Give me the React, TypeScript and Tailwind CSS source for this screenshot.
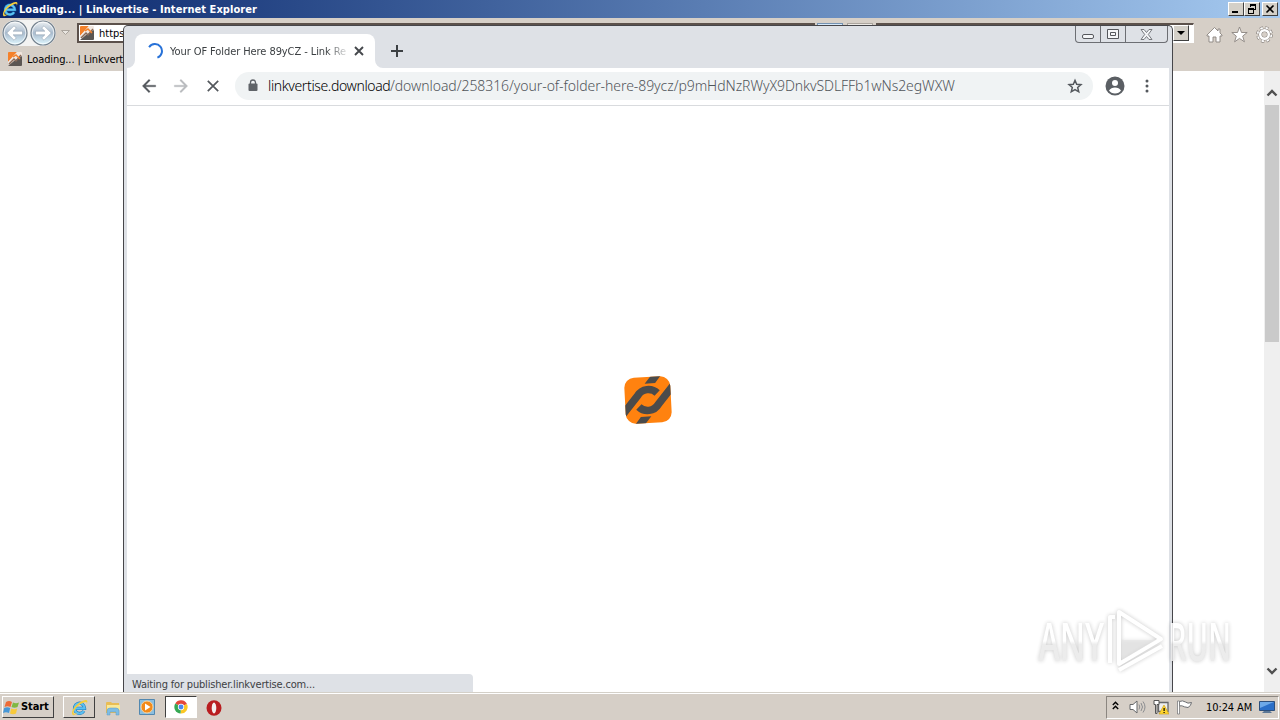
import { ReactNode } from "react";

const ARROW = "M20 11H7.83l5.59-5.59L12 4l-8 8 8 8 1.41-1.41L7.83 13H20z";

function IeLogo({ className }: { className: string }) {
  return (
    <svg viewBox="0 0 16 16" className={className}>
      <path d="M3.500 8.800h9.300a4.800 4.800 0 1 0-.7 2.500" fill="none" stroke="#1c76b8" strokeWidth="3" />
      <path d="M3.500 8.800h9.300a4.800 4.800 0 1 0-.7 2.500" fill="none" stroke="#5cc1f2" strokeWidth="2" />
      <path d="M1.300 14.700C-.9 11.500 6.500 2 13.500 1c2.200-.2 2.400 1.600 1.200 3.700.2-1.900-.5-2.300-2-1.700C7.500 4.600 1.500 10.800 2.500 13.300c.5 1 2.400.4 3.600-.3-2 1.900-4 2.900-4.800 1.700z" fill="#f4ce3c" />
    </svg>
  );
}

function LinkIcon() {
  return (
    <svg viewBox="0 0 14 14" className="w-3.5 h-3.5 shrink-0">
      <path d="M0 1q0-1 1-1h8L0 10z" fill="#f5812a" />
      <path d="M9 0h4q1 0 1 1v5L4 11l-4 1v-2z" fill="#f2e7df" />
      <path d="M0 14l6-5 8-5v9q0 1-1 1z" fill="#5b5653" />
      <path d="M1 12l5-5 2 2 5-6" fill="none" stroke="#8a6a58" strokeWidth="1.500" />
      <path d="M5 5l3-2 4 4" fill="none" stroke="#f5812a" strokeWidth="1.500" />
    </svg>
  );
}

function RoundArrow({ flip }: { flip?: boolean }) {
  return (
    <svg viewBox="0 0 26 26" className={flip ? "w-[26px] h-[26px] -scale-x-100" : "w-[26px] h-[26px]"}>
      <defs>
        <linearGradient id="orb" x1="0" y1="0" x2="0" y2="1">
          <stop offset="0" stopColor="#eef1f3" />
          <stop offset=".5" stopColor="#a9bbce" />
          <stop offset="1" stopColor="#e0f8ff" />
        </linearGradient>
      </defs>
      <circle cx="13" cy="13" r="12" fill="url(#orb)" stroke="#74818d" strokeWidth="1.200" />
      <circle cx="13" cy="13" r="10.800" fill="none" stroke="#fff" strokeOpacity=".7" />
      <path d="M4.800 13l7.200-7.200 2.300 2.300-3.200 3.100H20.500v3.600h-9.400l3.200 3.100-2.300 2.300z" fill="#fff" stroke="#8898a8" strokeWidth=".5" />
    </svg>
  );
}

function ClassicButton({ children }: { children: ReactNode }) {
  return (
    <div className="w-4 h-3.5 bg-[#d4d0c8] border border-t-white border-l-white border-b-[#404040] border-r-[#404040] flex items-center justify-center">
      {children}
    </div>
  );
}

function IeWindow() {
  return (
    <div className="h-[692px] flex flex-col">
      {/* Title bar */}
      <div className="h-[18px] shrink-0 flex items-center justify-between pl-0.5 pr-0.5 bg-linear-to-r from-[#0a246a] to-[#a6caf0]">
        <div className="flex items-center gap-px">
          <IeLogo className="w-4 h-4" />
          <span className="pt-px text-[11px] leading-[16px] font-bold text-white whitespace-nowrap tracking-[0.065px]">Loading... | Linkvertise - Internet Explorer</span>
        </div>
        <div className="flex items-center">
          <ClassicButton>
            <svg viewBox="0 0 12 10" className="w-3 h-2.5"><path d="M2 7h6v2H2z" /></svg>
          </ClassicButton>
          <ClassicButton>
            <svg viewBox="0 0 12 10" className="w-3 h-2.5" shapeRendering="crispEdges">
              <path d="M4 0h6v6H8V5h1V2H5v1H4zM2 4h6v6H2zM3 6v3h4V6z" fillRule="evenodd" />
            </svg>
          </ClassicButton>
          <span className="w-0.5" />
          <ClassicButton>
            <svg viewBox="0 0 12 10" className="w-3 h-2.5"><path d="M2.500 1.500l7 7m0-7l-7 7" stroke="#000" strokeWidth="1.600" /></svg>
          </ClassicButton>
        </div>
      </div>

      {/* Address row */}
      <div className="h-[30px] shrink-0 flex items-center bg-[#d6cfc7] pl-[2px] pr-[7px]">
        <div className="flex items-center gap-[2px] rounded-full bg-[#f3f3f2]">
          <RoundArrow />
          <RoundArrow flip />
        </div>
        <svg viewBox="0 0 9 6" className="w-[9px] h-1.5 ml-[5px]"><path d="M.5.500h8l-4 4z" fill="#e9e6e1" stroke="#aaa49d" /></svg>
        <div className="w-[738px] h-5 ml-[7px] bg-white border-2 border-[#5c514b] flex items-center pl-px gap-[5px] text-[11px] text-black">
          <LinkIcon />
          <span className="pt-0.5">https:</span>
        </div>
        <div className="h-5 w-[26px] ml-[2px] bg-[#d5e8fa] border border-[#7492b2]" />
        <div className="h-5 w-[26px] ml-[4px] bg-[#ece9e5] border border-[#aaa49d]" />
        <div className="w-[318px] h-5 ml-[3px] bg-white border-t-2 border-l-2 border-[#5c514b] border-b border-r border-b-white border-r-white flex justify-end pr-[4px]">
          <div className="w-4 h-4 bg-[#d4d0c8] border border-t-white border-l-white border-b-[#404040] border-r-[#404040] flex items-center justify-center">
            <svg viewBox="0 0 8 4" className="w-2 h-1"><path d="M0 0h8L4 4z" /></svg>
          </div>
        </div>
        <div className="flex-1 flex items-center justify-end gap-[8px] pt-[3px]">
          <svg viewBox="0 0 17 17" className="w-[17px] h-[17px]">
            <path d="M8.500 1.500L12 5V3h2v4l2 2v1h-2v6h-4v-5H7v5H3v-6H1V9z" fill="#fff" stroke="#8b8580" strokeWidth=".9" />
          </svg>
          <svg viewBox="0 0 17 17" className="w-[17px] h-[17px]">
            <path d="M8.500 1l2 5.500h5.700l-4.500 3.600 1.700 5.700-4.900-3.400-4.900 3.400 1.700-5.700L.8 6.500h5.700z" fill="#fff" stroke="#8b8580" strokeWidth=".9" />
          </svg>
          <svg viewBox="0 0 17 17" className="w-[17px] h-[17px]">
            <circle cx="8.500" cy="8.500" r="6.500" fill="none" stroke="#8b8580" strokeWidth="3.800" strokeDasharray="2.900 2.200" />
            <circle cx="8.500" cy="8.500" r="6.500" fill="none" stroke="#fff" strokeWidth="2.400" strokeDasharray="2.300 2.800" strokeDashoffset="-.3" />
            <circle cx="8.500" cy="8.500" r="4.300" fill="none" stroke="#8b8580" strokeWidth="3.600" />
            <circle cx="8.500" cy="8.500" r="4.300" fill="none" stroke="#fff" strokeWidth="2.500" />
          </svg>
        </div>
      </div>

      {/* Tab row */}
      <div className="h-[23px] shrink-0 flex items-center bg-[#d6cfc7] pl-2 pb-px gap-[5px] text-[11px] text-black">
        <LinkIcon />
        <span className="pt-[3px] whitespace-nowrap tracking-[-0.1px]">Loading... | Linkvertise</span>
      </div>

      {/* Page and scrollbar */}
      <div className="flex-1 flex justify-end bg-white">
        <div className="w-4 bg-[#efefef] flex flex-col items-center pt-[18px] pb-[17px]">
          <svg viewBox="0 0 12 8" className="w-3 h-2 shrink-0"><path d="M1.500 6.500L6 2l4.500 4.500" fill="none" stroke="#505050" strokeWidth="2.400" /></svg>
          <div className="w-3.5 h-[237px] mt-2 bg-[#cacaca] shrink-0" />
          <svg viewBox="0 0 12 8" className="w-3 h-2 mt-auto shrink-0"><path d="M1.500 1.500L6 6l4.500-4.500" fill="none" stroke="#505050" strokeWidth="2.400" /></svg>
        </div>
      </div>
    </div>
  );
}

function CaptionButtons() {
  return (
    <div className="w-[93px] h-[17px] mr-[4px] border border-t-0 border-[#6c6e73] rounded-b-[4px] flex">
      <div className="w-[25px] border-r border-[#6c6e73] flex items-center justify-center">
        <svg viewBox="0 0 14 8" className="w-3.5 h-2 mt-1"><rect x="1.500" y="2.500" width="11" height="4" rx="1.500" fill="#f4f5f7" stroke="#55575c" /></svg>
      </div>
      <div className="w-[25px] border-r border-[#6c6e73] flex items-center justify-center">
        <svg viewBox="0 0 12 10" className="w-3 h-2.5"><path d="M.5.500h11v9H.5zM3.500 3.500h5v3h-5z" fill="#f4f5f7" stroke="#55575c" /></svg>
      </div>
      <div className="flex-1 flex items-center justify-center">
        <svg viewBox="0 0 13 11" className="w-[13px] h-[11px]">
          <path d="M1 .5h3l2.500 3 2.500-3h3L8.300 5.500l3.700 5H9l-2.500-3-2.500 3H1l3.700-5z" fill="#f4f5f7" stroke="#6c6e73" strokeWidth=".9" />
        </svg>
      </div>
    </div>
  );
}

function ChromeLogo() {
  return (
    <svg viewBox="0 0 16 16" className="w-3.5 h-3.5">
      <path d="M8 8L1.500 4A7.500 7.500 0 0 1 14.800 4.700z" fill="#e4473a" />
      <path d="M8 8l6.800-3.300A7.500 7.500 0 0 1 7.500 15.500z" fill="#fbc724" />
      <path d="M8 8l-.5 7.500A7.500 7.500 0 0 1 1.500 4z" fill="#35a853" />
      <circle cx="8" cy="8" r="3.600" fill="#fff" />
      <circle cx="8" cy="8" r="2.800" fill="#4a87ee" />
    </svg>
  );
}

function PageLogo() {
  return (
    <svg viewBox="0 0 48 48" className="w-12 h-12">
      <defs>
        <clipPath id="tile"><rect x="1" y="1" width="46" height="46" rx="10" /></clipPath>
      </defs>
      <g transform="rotate(-3 24 24)" clipPath="url(#tile)">
        <rect width="48" height="48" fill="#ff820f" />
        <g fill="none" stroke="#4b4b4b" strokeWidth="7.500">
          <path d="M-3 38.500L14 19A12.500 12.500 0 0 1 33.500 17.500" />
          <path d="M51 9.500L34 29A12.500 12.500 0 0 1 14.500 30.500" />
        </g>
        <path d="M28 0h10l-6 7.500H21.500zM20 48H10l6-7.500h10.500z" fill="#4b4b4b" />
      </g>
    </svg>
  );
}

function ChromeWindow() {
  return (
    <div className="absolute left-[123px] top-[25px] w-[1050px] h-[667px] border-t border-x border-[#46464a] rounded-t-[5px] bg-[#dee1e6] overflow-hidden flex flex-col">
      {/* Tab strip */}
      <div className="h-[42px] shrink-0 flex justify-between">
        <div className="flex items-end pl-[3px]">
          <svg viewBox="0 0 8 8" className="w-2 h-2"><path d="M8 0v8H0a8 8 0 0 0 8-8z" fill="#fff" /></svg>
          <div className="w-[240px] h-[34px] bg-white rounded-t-lg flex items-center pl-3 pr-[11px]">
            <svg viewBox="0 0 16 16" className="w-4 h-4 shrink-0">
              <path d="M2.100 4.200A7 7 0 1 1 10.400 14.600" fill="none" stroke="#2872d8" strokeWidth="2" />
            </svg>
            <span className="ml-[7px] w-[177px] pt-0.5 shrink-0 whitespace-nowrap text-[11px] tracking-[-0.08px] text-[#3c4043] mask-r-from-88% mask-r-to-102%">Your OF Folder Here 89yCZ - Link Re</span>
            <svg viewBox="0 0 10 10" className="w-2.5 h-2.5 ml-[7px] shrink-0"><path d="M1 1l8 8m0-8L1 9" stroke="#45484c" strokeWidth="1.900" /></svg>
          </div>
          <svg viewBox="0 0 8 8" className="w-2 h-2"><path d="M0 0v8h8a8 8 0 0 1-8-8z" fill="#fff" /></svg>
          <svg viewBox="0 0 12 12" className="w-3 h-3 ml-2 mb-[11px]"><path d="M6 0v12M0 6h12" stroke="#3c4043" strokeWidth="2" /></svg>
        </div>
        <CaptionButtons />
      </div>

      {/* Toolbar */}
      <div className="mx-[3px] h-[38px] shrink-0 bg-white border-b border-[#d9dbde] flex items-center pl-[12px] pr-[12px] pb-px">
        <svg viewBox="0 0 24 24" className="w-5 h-5"><path d={ARROW} fill="#54585d" stroke="#54585d" strokeWidth=".4" /></svg>
        <svg viewBox="0 0 24 24" className="w-5 h-5 ml-3 -scale-x-100"><path d={ARROW} fill="#b9bbbe" stroke="#b9bbbe" strokeWidth=".4" /></svg>
        <svg viewBox="0 0 12 12" className="w-3 h-3 ml-4"><path d="M.8.800l10.400 10.400m0-10.400L.8 11.200" stroke="#54585d" strokeWidth="1.700" /></svg>
        <div className="ml-[16px] w-[858px] h-7 rounded-full bg-[#f0f3f4] flex items-center pl-[13px] pr-[10px]">
          <svg viewBox="0 0 10 13" className="w-2.5 h-[13px] mb-px shrink-0">
            <path d="M2.500 5V3.500a2.500 2.500 0 0 1 5 0V5" fill="none" stroke="#5f6368" strokeWidth="1.300" />
            <rect x=".5" y="4.500" width="9" height="7.500" rx="1" fill="#5f6368" />
          </svg>
          <div className="ml-[10px] font-['Noto_Sans'] text-[14px] leading-5 whitespace-nowrap flex font-light">
            <span className="w-[122px] text-black tracking-[-0.37px]">linkvertise.download</span>
            <span className="text-[#50555a] tracking-[-0.068px]">/download/258316/your-of-folder-here-89ycz/p9mHdNzRWyX9DnkvSDLFFb1wNs2egWXW</span>
          </div>
          <svg viewBox="0 0 24 24" className="w-4 h-4 ml-auto shrink-0">
            <path d="M12 3.500l2.500 6 6.500.5-5 4.300 1.600 6.400L12 17.300l-5.600 3.400L8 14.300 3 10l6.500-.5z" fill="none" stroke="#54585d" strokeWidth="2.200" />
          </svg>
        </div>
        <svg viewBox="0 0 20 20" className="w-5 h-5 ml-3">
          <circle cx="10" cy="10" r="9.500" fill="#5b5f64" />
          <circle cx="10" cy="7" r="3" fill="#fff" />
          <path d="M4 14.500q2-3 6-3t6 3q-2 3-6 3t-6-3z" fill="#fff" />
        </svg>
        <svg viewBox="0 0 4 14" className="w-1 h-3.5 ml-5">
          <circle cx="2" cy="2" r="1.500" fill="#54585d" />
          <circle cx="2" cy="7" r="1.500" fill="#54585d" />
          <circle cx="2" cy="12" r="1.500" fill="#54585d" />
        </svg>
      </div>

      {/* Page */}
      <div className="mx-[3px] flex-1 bg-white flex flex-col">
        <div className="h-[568px] flex items-center justify-center pt-[20px]">
          <PageLogo />
        </div>
        <div className="w-[346px] h-[18px] bg-[#dee1e6] rounded-tr-[4px] pl-[5px] text-[11px] leading-[21px] text-[#3c4043] whitespace-nowrap tracking-[-0.18px]">Waiting for publisher.linkvertise.com...</div>
      </div>
    </div>
  );
}

function Watermark() {
  return (
    <div className="absolute left-[1036px] top-[606px] w-[200px] h-[70px] flex items-center opacity-85 drop-shadow-[0_0_2px_rgba(0,0,0,0.26)] font-['Open_Sans'] font-semibold text-[52px] leading-[70px] whitespace-nowrap">
      <span className="w-[66px] shrink-0"><span className="inline-block origin-left scale-x-[0.62] pl-1 text-transparent bg-clip-text bg-linear-to-b from-white from-50% to-[#e9e9e9] to-55%">ANY</span></span>
      <svg viewBox="0 0 60 68" className="w-[60px] h-[68px] ml-[5px] mt-0.5 shrink-0">
        <g fill="none" stroke="#fff" strokeWidth="4" strokeLinejoin="round">
          <path d="M12 4v52L54 31z" />
          <path d="M8 9H3v46M12 62l43-24" />
        </g>
        <path d="M15 32h34L15 52z" fill="#ddd" fillOpacity=".5" />
      </svg>
      <span className="ml-px shrink-0"><span className="inline-block origin-left scale-x-[0.56] text-transparent bg-clip-text bg-linear-to-b from-white from-50% to-[#e9e9e9] to-55%">RUN</span></span>
    </div>
  );
}

function Taskbar() {
  return (
    <div className="relative h-[28px] bg-[#d6cfc7] border-t border-[#d4d0c8] flex items-center shadow-[inset_0_1px_0_#fff] text-[11px] text-black">
      <div className="ml-[2px] mt-px w-[52px] h-[22px] border border-t-white border-l-white border-b-[#404040] border-r-[#404040] flex items-center font-bold">
        <svg viewBox="0 0 18 16" className="w-[18px] h-4 shrink-0">
          <path d="M3 3q3-2 6 0L7.500 8q-3-1.500-6 0z" fill="#ed6b38" />
          <path d="M10 3.500q3 1.500 6 0L14.500 8q-3 1.500-6 0z" fill="#80b842" />
          <path d="M1.200 9q3-1.500 6 0L6 14q-3-1.500-6 0z" fill="#4797d7" />
          <path d="M8.200 9.500q3 1.500 6 0L13 14.500q-3 1.500-6 0z" fill="#f8ca3b" />
        </svg>
        <span className="tracking-[-0.1px]">Start</span>
      </div>
      <div className="ml-[9px] mt-px w-8 h-[22px] border border-t-white border-l-white border-b-[#404040] border-r-[#404040] flex items-center justify-center">
        <IeLogo className="w-[17px] h-[17px]" />
      </div>
      <svg viewBox="0 0 16 16" className="w-4 h-4 ml-[10px] mt-0.5">
        <path d="M1 3q0-1 1-1h4l1 1h7v10H1z" fill="#e9bd55" />
        <path d="M2 5h13v5H2z" fill="#fae998" />
        <path d="M2 15v-4q0-3 3-3h6q3 0 3 3v4h-3v-3H5v3z" fill="#7dbde4" stroke="#5d9bc4" strokeWidth=".5" />
      </svg>
      <svg viewBox="0 0 16 16" className="w-4 h-4 ml-[18px]">
        <path d="M.5.500h15v15H.5z" fill="#8bbfe0" stroke="#5288b0" />
        <circle cx="8" cy="8" r="6" fill="#f28a19" stroke="#fbd39c" />
        <path d="M6 4.500v7L11.500 8z" fill="#fff" />
      </svg>
      <div className="ml-[10px] mt-px w-8 h-[22px] bg-white border border-t-[#404040] border-l-[#404040] border-b-white border-r-white flex items-center justify-center">
        <ChromeLogo />
      </div>
      <svg viewBox="0 0 16 16" className="w-4 h-4 ml-[9px] mt-0.5">
        <ellipse cx="8" cy="8" rx="7.500" ry="7.700" fill="#b91d20" />
        <ellipse cx="8" cy="8" rx="2.300" ry="5.400" fill="#f4eeee" />
      </svg>

      {/* Tray */}
      <div className="ml-auto mr-px mt-px w-[173px] h-[23px] border border-t-[#8b8680] border-l-[#8b8680] border-b-white border-r-white flex items-center pl-[5px] pr-[3px]">
        <svg viewBox="0 0 7 9" className="w-[7px] h-[9px] mb-1"><path d="M.8 4l2.700-2.700L6.200 4M.8 8l2.700-2.700L6.200 8" fill="none" stroke="#000" strokeWidth="1.400" /></svg>
        <svg viewBox="0 0 17 14" className="w-[17px] h-3.5 ml-[10px]">
          <path d="M1 4.500h3L8 1v12L4 9.500H1z" fill="#fff" stroke="#66686a" />
          <path d="M10 4.500q1.500 2.500 0 5M12 3q3 4 0 8M14 1.500q4 5.500 0 11" fill="none" stroke="#8b8d90" />
        </svg>
        <svg viewBox="0 0 16 16" className="w-4 h-4 ml-[7px]">
          <path d="M5.500 3.500h9.500v9H5.500z" fill="#eee" stroke="#66686a" strokeWidth="1.300" />
          <path d="M1 1.500h5v4H4v9H2.500v-9H1z" fill="#fff" stroke="#555" />
          <path d="M11 6l5 9H6z" fill="#ffd52e" stroke="#c99a12" strokeWidth=".6" />
          <path d="M10.500 9h1.200v3h-1.200zM10.500 13h1.200v1h-1.200z" />
        </svg>
        <svg viewBox="0 0 17 15" className="w-[17px] h-[15px] ml-[8px]">
          <path d="M2.500 1.500q3-1.500 6 .5 2 2 6 .5-.5 3.500-3.500 5-4-.5-5.500-1.500-1-.5-3 0z" fill="#fff" stroke="#6b6d70" />
          <path d="M.5 1h2v13h-2z" fill="#fff" stroke="#6b6d70" strokeWidth=".7" />
        </svg>
        <span className="ml-[12px] pt-0.5 whitespace-nowrap tracking-[-0.1px]">10:24 AM</span>
        <svg viewBox="0 0 16 13" className="w-4 h-[13px] ml-auto shrink-0">
          <path d="M.5.500h15v9H.5z" fill="#2a6fc8" stroke="#2c4f7c" />
          <path d="M1 1h14L1 7z" fill="#6da9e8" />
          <path d="M5 10h6l2 2H3z" fill="#5b7796" />
        </svg>
      </div>
    </div>
  );
}

export default function App() {
  return (
    <div className="relative w-[1280px] h-[720px] overflow-hidden bg-white font-['DejaVu_Sans_Condensed','DejaVu_Sans',sans-serif]">
      <IeWindow />
      <ChromeWindow />
      <Watermark />
      <Taskbar />
    </div>
  );
}
